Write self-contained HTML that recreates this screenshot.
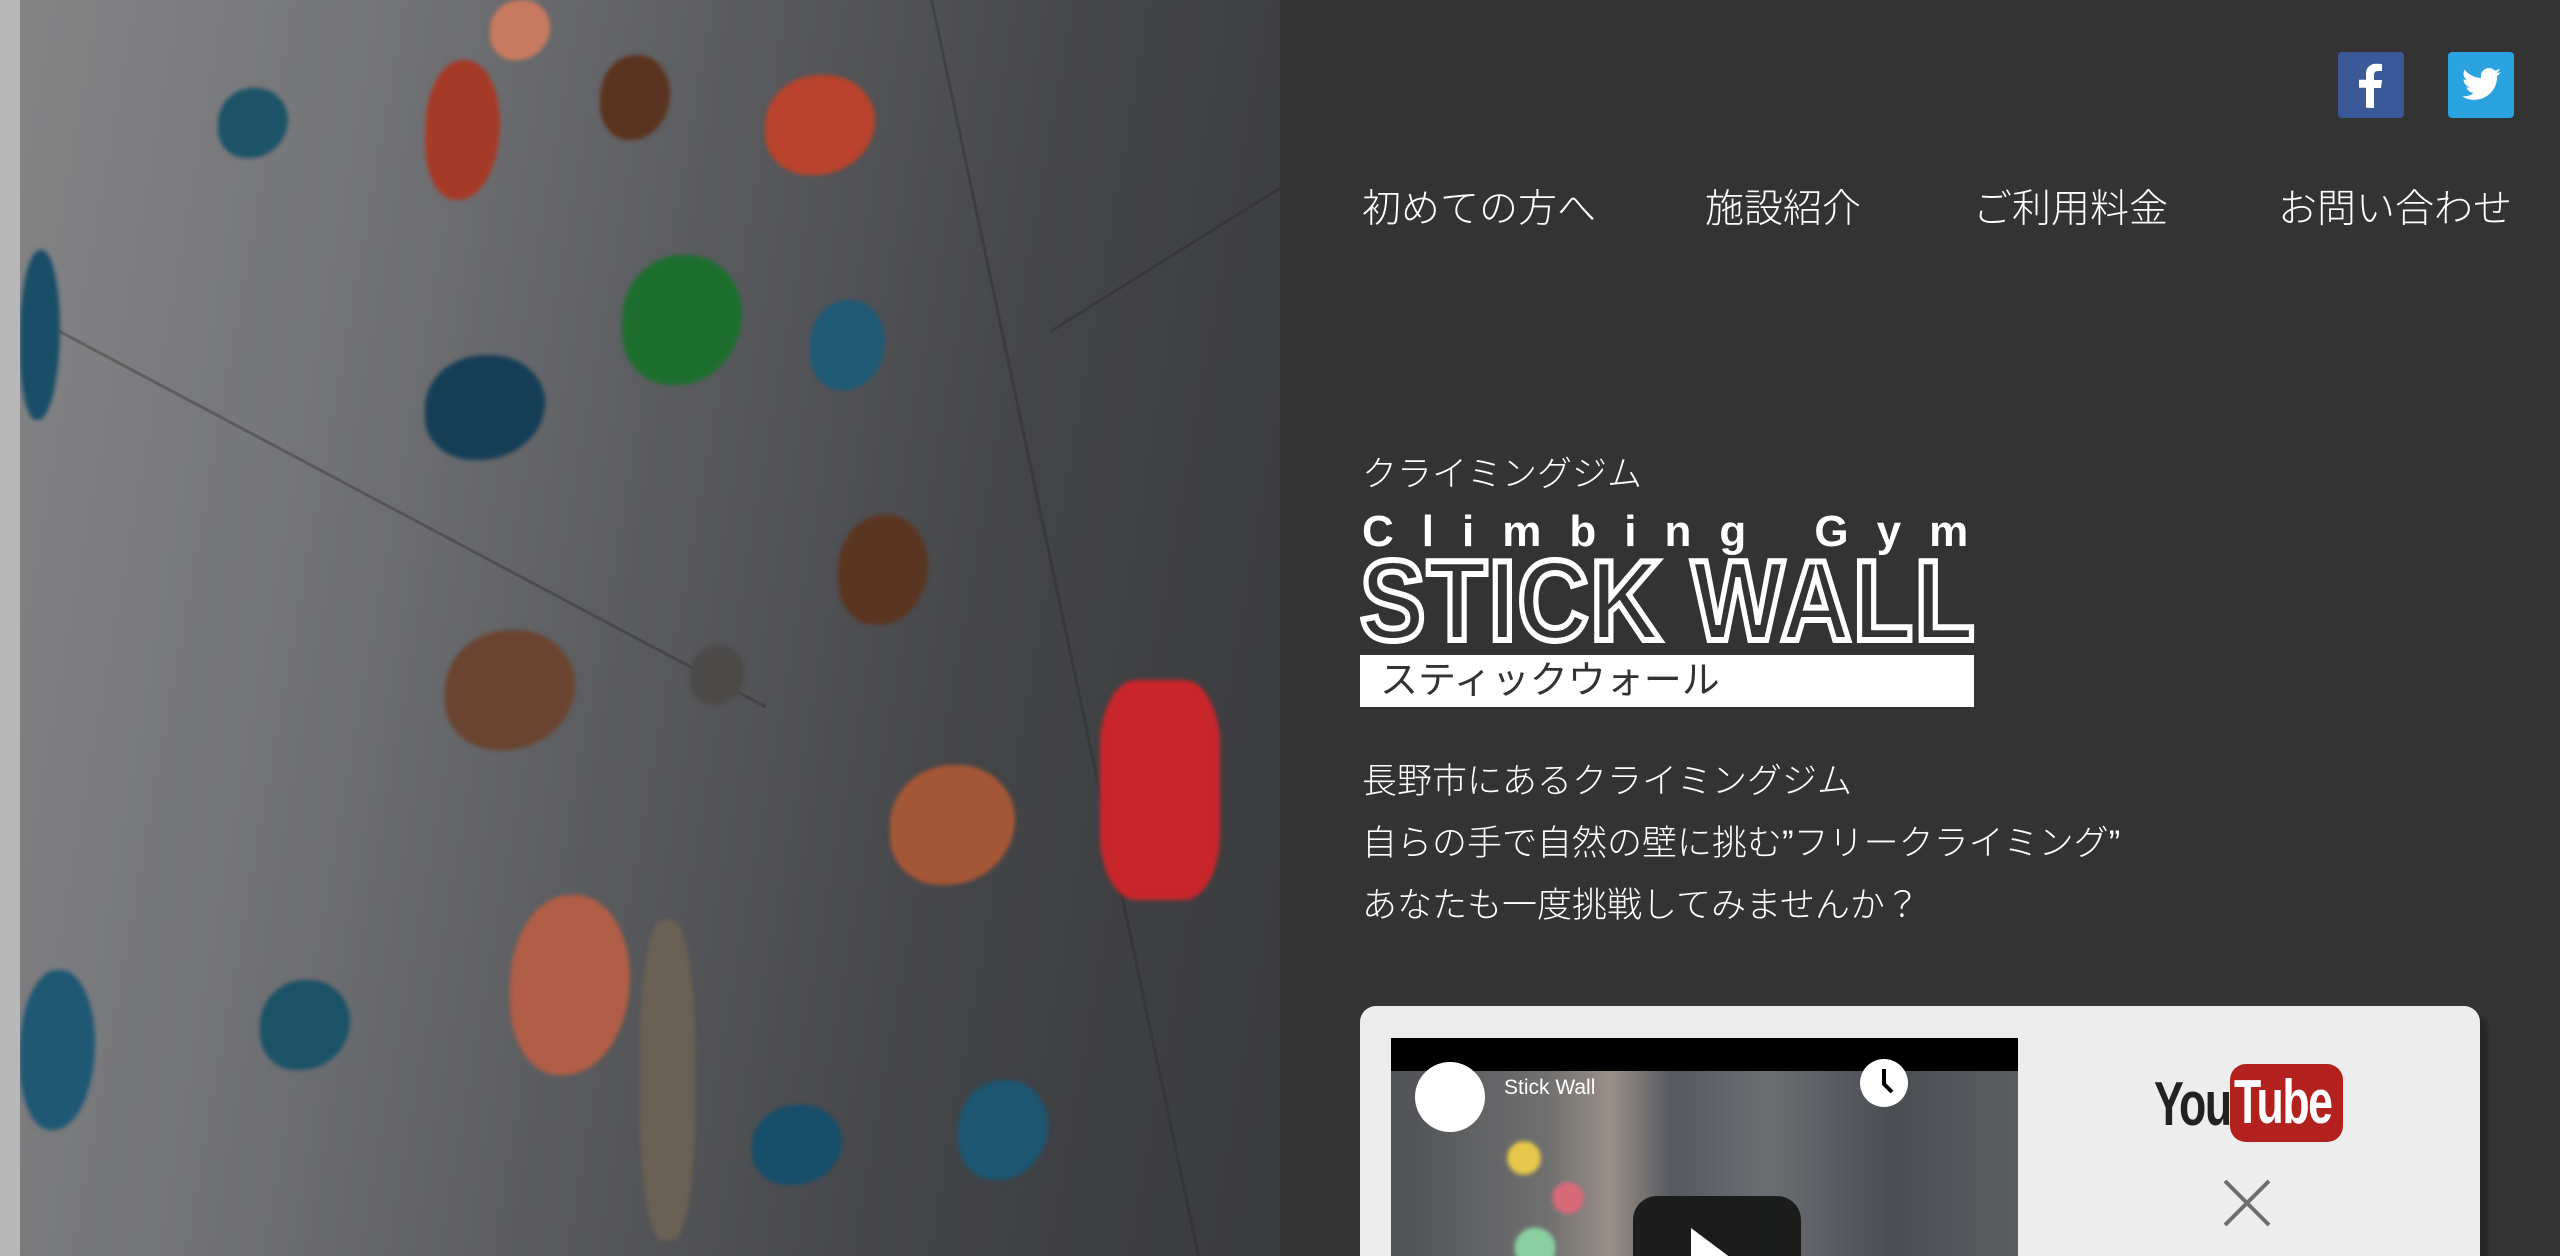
<!DOCTYPE html>
<html><head><meta charset="utf-8">
<style>
*{margin:0;padding:0;box-sizing:border-box}
html,body{width:2560px;height:1256px;overflow:hidden;background:#333}
body{position:relative;font-family:"Liberation Sans","Noto Sans CJK JP",sans-serif;color:#fff}
#photo{position:absolute;left:0;top:0;width:1280px;height:1256px;overflow:hidden;
background:linear-gradient(100deg,#858586 0%,#747578 25%,#5a5b5e 50%,#434447 75%,#3a3b3e 100%)}
#photo .edge{position:absolute;left:0;top:0;width:20px;height:1256px;background:#b8b8b8}
.h{position:absolute;border-radius:50% 45% 55% 40%;filter:blur(2px)}
.line{position:absolute;background:rgba(40,40,40,.35);transform-origin:0 0}
.nav{position:absolute;top:178px;font-size:39px;white-space:nowrap;font-weight:300}
.sm{position:absolute;top:52px;width:66px;height:66px;border-radius:4px}
.p{position:absolute;left:1362px;font-size:35px;white-space:nowrap;font-weight:300}
</style></head><body>
<div id="photo">
 <div class="line" style="left:930px;top:0;width:3px;height:1300px;transform:rotate(-12deg)"></div>
 <div class="line" style="left:60px;top:330px;width:800px;height:3px;transform:rotate(28deg)"></div>
 <div class="line" style="left:1050px;top:330px;width:280px;height:3px;transform:rotate(-32deg)"></div>
 <div class="h" style="left:218px;top:88px;width:70px;height:70px;background:#1c5366"></div>
 <div class="h" style="left:425px;top:60px;width:75px;height:140px;background:#a63a28"></div>
 <div class="h" style="left:600px;top:55px;width:70px;height:85px;background:#5a3420"></div>
 <div class="h" style="left:765px;top:75px;width:110px;height:100px;background:#b9432c"></div>
 <div class="h" style="left:490px;top:0px;width:60px;height:60px;background:#c87a60"></div>
 <div class="h" style="left:20px;top:250px;width:40px;height:170px;background:#1a4d68"></div>
 <div class="h" style="left:622px;top:255px;width:120px;height:130px;background:#1d6e2e"></div>
 <div class="h" style="left:425px;top:355px;width:120px;height:105px;background:#153e55"></div>
 <div class="h" style="left:810px;top:300px;width:75px;height:90px;background:#1e5a74"></div>
 <div class="h" style="left:838px;top:515px;width:90px;height:110px;background:#5a3622"></div>
 <div class="h" style="left:445px;top:630px;width:130px;height:120px;background:#6a4431"></div>
 <div class="h" style="left:690px;top:645px;width:55px;height:60px;background:#4c4a48"></div>
 <div class="h" style="left:1100px;top:680px;width:120px;height:220px;background:#c8262b;border-radius:30%"></div>
 <div class="h" style="left:890px;top:765px;width:125px;height:120px;background:#a45737"></div>
 <div class="h" style="left:510px;top:895px;width:120px;height:180px;background:#b05e47"></div>
 <div class="h" style="left:260px;top:980px;width:90px;height:90px;background:#1b5266"></div>
 <div class="h" style="left:20px;top:970px;width:75px;height:160px;background:#1e5873"></div>
 <div class="h" style="left:752px;top:1105px;width:90px;height:80px;background:#174e6a"></div>
 <div class="h" style="left:958px;top:1080px;width:90px;height:100px;background:#1c5670"></div>
 <div class="h" style="left:640px;top:920px;width:55px;height:320px;background:#6b6054;border-radius:40%"></div>
 <div class="edge"></div>
</div>

<div class="sm" style="left:2338px;background:#3b5998">
 <svg width="66" height="66" viewBox="0 0 66 66"><path d="M36 56V36h7l1-8h-8v-5c0-2 1-4 4-4h4v-7c-1 0-3-.3-6-.3-6 0-10 4-10 10v6h-7v8h7v20z" fill="#fff"/></svg>
</div>
<div class="sm" style="left:2448px;background:#2aa3e0">
 <svg width="66" height="66" viewBox="0 0 66 66"><path d="M53 20c-1.5.7-3 1-4.6 1.2 1.7-1 2.9-2.5 3.5-4.4-1.6.9-3.3 1.6-5.1 1.9a8 8 0 0 0-13.7 7.3c-6.700-.3-12.6-3.5-16.5-8.4-2.2 3.7-.9 8.3 2.5 10.7-1.3 0-2.5-.4-3.6-1 0 3.9 2.7 7.2 6.4 7.9-1.2.3-2.4.4-3.6.1 1 3.200 4 5.500 7.5 5.600A16 16 0 0 1 14 44.2a22.7 22.7 0 0 0 35-20.2c1.6-1.1 2.9-2.5 4-4z" fill="#fff"/></svg>
</div>

<div class="nav" style="left:1362px">初めての方へ</div>
<div class="nav" style="left:1705px">施設紹介</div>
<div class="nav" style="left:1973px">ご利用料金</div>
<div class="nav" style="left:2278px">お問い合わせ</div>

<div class="p" style="top:446px;font-size:35px">クライミングジム</div>
<div style="position:absolute;left:1362px;top:508px;font:bold 44px 'Liberation Sans',sans-serif;letter-spacing:28px;white-space:nowrap;line-height:48px">Climbing Gym</div>
<div style="position:absolute;left:1360px;top:545px;font:bold 114px 'Liberation Sans',sans-serif;line-height:1;white-space:nowrap;transform:scaleX(.86);transform-origin:0 0;color:#333;-webkit-text-stroke:6px #fff;letter-spacing:2px">STICK WALL</div>
<div style="position:absolute;left:1360px;top:655px;width:614px;height:52px;background:#fff;color:#333;font-size:38px;line-height:52px;padding-left:20px;white-space:nowrap">スティックウォール</div>

<div class="p" style="top:753px">長野市にあるクライミングジム</div>
<div class="p" style="top:815px">自らの手で自然の壁に挑む”フリークライミング”</div>
<div class="p" style="top:877px">あなたも一度挑戦してみませんか？</div>

<div style="position:absolute;left:1360px;top:1006px;width:1120px;height:300px;background:#ededed;border-radius:16px;box-shadow:8px 8px 4px rgba(0,0,0,.25)"></div>
<div style="position:absolute;left:1391px;top:1038px;width:627px;height:230px;background:#000;overflow:hidden">
 <div style="position:absolute;left:0;top:33px;width:627px;height:200px;background:linear-gradient(90deg,#4f5155 0%,#707070 25%,#9a8f86 35%,#555960 45%,#6b6f72 60%,#4a4d52 80%,#5c5e62 100%)"></div>
 <div style="position:absolute;left:100px;top:60px;width:110px;height:200px;background:radial-gradient(circle at 30% 30%,#e8c84a 0 10%,transparent 11%),radial-gradient(circle at 70% 50%,#d86a7a 0 12%,transparent 13%),radial-gradient(circle at 40% 75%,#8bd0a0 0 12%,transparent 13%);filter:blur(2px)"></div>
 <div style="position:absolute;left:24px;top:24px;width:70px;height:70px;border-radius:50%;background:#fff"></div>
 <div style="position:absolute;left:113px;top:38px;font-size:21px;color:#fff">Stick Wall</div>
 <div style="position:absolute;left:469px;top:21px;width:48px;height:48px;border-radius:50%;background:#fff">
  <svg width="48" height="48"><path d="M24 10v15l8 8" stroke="#000" stroke-width="4" fill="none"/></svg></div>
 <div style="position:absolute;left:242px;top:158px;width:168px;height:120px;border-radius:24px;background:rgba(20,20,20,.9)"></div>
 <div style="position:absolute;left:300px;top:190px;width:0;height:0;border-left:40px solid #fff;border-top:30px solid transparent;border-bottom:30px solid transparent"></div>
</div>
<div style="position:absolute;left:2154px;top:1072px;font:bold 62px 'Liberation Sans',sans-serif;color:#222;letter-spacing:-2px;line-height:66px;transform:scaleX(.72);transform-origin:0 0">You</div>
<div style="position:absolute;left:2230px;top:1064px;width:113px;height:78px;background:#b3211f;border-radius:16px;overflow:hidden">
 <div style="position:absolute;left:4px;top:6px;font:bold 62px 'Liberation Sans',sans-serif;color:#fff;letter-spacing:-2px;line-height:66px;transform:scaleX(.72);transform-origin:0 0;white-space:nowrap">Tube</div>
</div>
<svg style="position:absolute;left:2222px;top:1178px" width="50" height="50"><path d="M3 3L47 47M47 3L3 47" stroke="#6e6e6e" stroke-width="4"/></svg>
</body></html>
